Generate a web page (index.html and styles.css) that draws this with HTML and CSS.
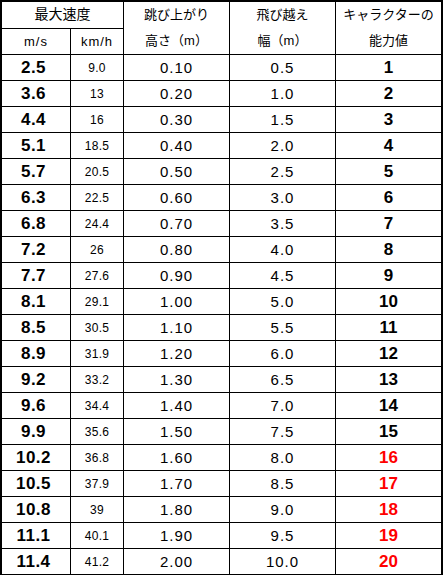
FILE: index.html
```html
<!DOCTYPE html>
<html lang="ja">
<head>
<meta charset="utf-8">
<link rel="stylesheet" href="styles.css">
</head>
<body>
<table class="tbl">
  <colgroup>
    <col class="c1"><col class="c2"><col class="c3"><col class="c4"><col class="c5">
  </colgroup>
  <thead>
    <tr class="h1">
      <th colspan="2" class="hd">最大速度</th>
      <th rowspan="2" class="hd two"><div>跳び上がり</div><div>高さ（m）</div></th>
      <th rowspan="2" class="hd two"><div>飛び越え</div><div>幅（m）</div></th>
      <th rowspan="2" class="hd two last"><div>キャラクターの</div><div>能力値</div></th>
    </tr>
    <tr class="h2">
      <th class="hd unit">m/s</th>
      <th class="hd unit">km/h</th>
    </tr>
  </thead>
  <tbody>
    <tr><td class="ms">2.5</td><td class="kmh">9.0</td><td class="v">0.10</td><td class="v">0.5</td><td class="lv last">1</td></tr>
    <tr><td class="ms">3.6</td><td class="kmh">13</td><td class="v">0.20</td><td class="v">1.0</td><td class="lv last">2</td></tr>
    <tr><td class="ms">4.4</td><td class="kmh">16</td><td class="v">0.30</td><td class="v">1.5</td><td class="lv last">3</td></tr>
    <tr><td class="ms">5.1</td><td class="kmh">18.5</td><td class="v">0.40</td><td class="v">2.0</td><td class="lv last">4</td></tr>
    <tr><td class="ms">5.7</td><td class="kmh">20.5</td><td class="v">0.50</td><td class="v">2.5</td><td class="lv last">5</td></tr>
    <tr><td class="ms">6.3</td><td class="kmh">22.5</td><td class="v">0.60</td><td class="v">3.0</td><td class="lv last">6</td></tr>
    <tr><td class="ms">6.8</td><td class="kmh">24.4</td><td class="v">0.70</td><td class="v">3.5</td><td class="lv last">7</td></tr>
    <tr><td class="ms">7.2</td><td class="kmh">26</td><td class="v">0.80</td><td class="v">4.0</td><td class="lv last">8</td></tr>
    <tr><td class="ms">7.7</td><td class="kmh">27.6</td><td class="v">0.90</td><td class="v">4.5</td><td class="lv last">9</td></tr>
    <tr><td class="ms">8.1</td><td class="kmh">29.1</td><td class="v">1.00</td><td class="v">5.0</td><td class="lv last">10</td></tr>
    <tr><td class="ms">8.5</td><td class="kmh">30.5</td><td class="v">1.10</td><td class="v">5.5</td><td class="lv last">11</td></tr>
    <tr><td class="ms">8.9</td><td class="kmh">31.9</td><td class="v">1.20</td><td class="v">6.0</td><td class="lv last">12</td></tr>
    <tr><td class="ms">9.2</td><td class="kmh">33.2</td><td class="v">1.30</td><td class="v">6.5</td><td class="lv last">13</td></tr>
    <tr><td class="ms">9.6</td><td class="kmh">34.4</td><td class="v">1.40</td><td class="v">7.0</td><td class="lv last">14</td></tr>
    <tr><td class="ms">9.9</td><td class="kmh">35.6</td><td class="v">1.50</td><td class="v">7.5</td><td class="lv last">15</td></tr>
    <tr><td class="ms">10.2</td><td class="kmh">36.8</td><td class="v">1.60</td><td class="v">8.0</td><td class="lv last red">16</td></tr>
    <tr><td class="ms">10.5</td><td class="kmh">37.9</td><td class="v">1.70</td><td class="v">8.5</td><td class="lv last red">17</td></tr>
    <tr><td class="ms">10.8</td><td class="kmh">39</td><td class="v">1.80</td><td class="v">9.0</td><td class="lv last red">18</td></tr>
    <tr><td class="ms">11.1</td><td class="kmh">40.1</td><td class="v">1.90</td><td class="v">9.5</td><td class="lv last red">19</td></tr>
    <tr class="end"><td class="ms">11.4</td><td class="kmh">41.2</td><td class="v">2.00</td><td class="v">10.0</td><td class="lv last red">20</td></tr>
  </tbody>
</table>
</body>
</html>
```

FILE: styles.css
```css
html, body {
  margin: 0;
  padding: 0;
  background: #fff;
}
.tbl {
  border-collapse: separate;
  border-spacing: 0;
  border: 2px solid #000;
  table-layout: fixed;
  width: 443px;
  font-family: "Liberation Sans", "Noto Sans CJK JP", sans-serif;
  color: #000;
}
.c1 { width: 69px; }
.c2 { width: 53px; }
.c3 { width: 106px; }
.c4 { width: 106px; }
.c5 { width: 105px; }
.tbl th, .tbl td {
  padding: 0;
  height: 25px;
  text-align: center;
  vertical-align: middle;
  border-right: 1px solid #000;
  border-bottom: 1px solid #000;
  white-space: nowrap;
  overflow: hidden;
}
.tbl .last { border-right: none; }
.tbl tr.end td { border-bottom: none; }
.hd {
  font-weight: normal;
  font-size: 14px;
  line-height: 25px;
}
.two {
  height: 51px;
  font-size: 13px;
}
.two div {
  height: 26px;
  line-height: 26px;
}
.unit {
  font-size: 13px;
  letter-spacing: 1px;
}
.ms {
  font-size: 17px;
  font-weight: bold;
  letter-spacing: 0.5px;
  padding-right: 5px !important;
}
.kmh {
  font-size: 12px;
  letter-spacing: 0.3px;
}
.v {
  font-size: 15px;
  letter-spacing: 1px;
}
.lv {
  font-size: 17px;
  font-weight: bold;
}
.red { color: #ff0000; }
```
